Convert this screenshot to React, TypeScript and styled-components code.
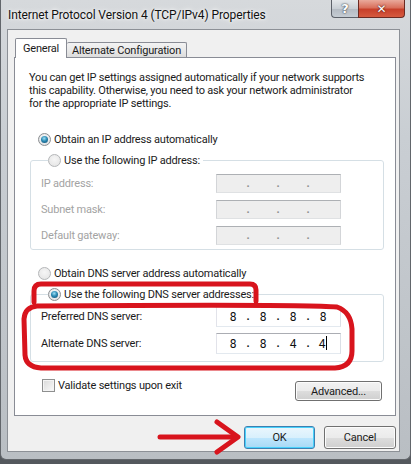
import React from "react";
import styled, { createGlobalStyle } from "styled-components";

const GlobalStyle = createGlobalStyle`
  html, body {
    margin: 0;
    padding: 0;
    background: #54585d;
  }
  body {
    font-family: Roboto, "Noto Sans", Arial, sans-serif;
    font-size: 11px;
    letter-spacing: -0.2px;
    color: #1b1b1b;
  }
`;

const ipRows = [
  { label: "IP address:" },
  { label: "Subnet mask:" },
  { label: "Default gateway:" },
];

const dnsRows = [
  { label: "Preferred DNS server:", value: ["8", "8", "8", "8"], caret: false },
  { label: "Alternate DNS server:", value: ["8", "8", "4", "4"], caret: true },
];

const IpField: React.FC<{ value?: string[]; disabled?: boolean; caret?: boolean; height: number }> = ({
  value = ["", "", "", ""],
  disabled,
  caret,
  height,
}) => (
  <IpBox $disabled={disabled} $h={height}>
    {value.map((octet, i) => (
      <React.Fragment key={i}>
        {i > 0 && <IpDot $disabled={disabled}>.</IpDot>}
        <Octet>
          {octet}
          {caret && i === 3 && <Caret />}
        </Octet>
      </React.Fragment>
    ))}
  </IpBox>
);

const App: React.FC = () => {
  return (
    <>
      <GlobalStyle />
      <Window>
        <TitleBar>
          <Title>Internet Protocol Version 4 (TCP/IPv4) Properties</Title>
          <CaptionButtons>
            <HelpButton>?</HelpButton>
            <CloseButton>✕</CloseButton>
          </CaptionButtons>
        </TitleBar>

        <Client>
          <TabStrip>
            <Tab $active>General</Tab>
            <Tab>Alternate Configuration</Tab>
          </TabStrip>

          <TabPanel>
            <Intro>
              You can get IP settings assigned automatically if your network supports
              <br />
              this capability. Otherwise, you need to ask your network administrator
              <br />
              for the appropriate IP settings.
            </Intro>

            <OptionRow $top={21}>
              <Radio $checked />
              <span>Obtain an IP address automatically</span>
            </OptionRow>

            <GroupBox>
              <GroupLegend>
                <Radio $dim />
                <span>Use the following IP address:</span>
              </GroupLegend>
              <FieldRows $gap={7}>
                {ipRows.map((row) => (
                  <FieldRow key={row.label}>
                    <FieldLabel $disabled>{row.label}</FieldLabel>
                    <IpField disabled height={19} />
                  </FieldRow>
                ))}
              </FieldRows>
            </GroupBox>

            <OptionRow $top={15}>
              <Radio $dim />
              <span>Obtain DNS server address automatically</span>
            </OptionRow>

            <GroupBox $dns>
              <GroupLegend>
                <Radio $checked />
                <span>Use the following DNS server addresses:</span>
              </GroupLegend>
              <FieldRows $gap={6}>
                {dnsRows.map((row) => (
                  <FieldRow key={row.label}>
                    <FieldLabel>{row.label}</FieldLabel>
                    <IpField value={row.value} caret={row.caret} height={21} />
                  </FieldRow>
                ))}
              </FieldRows>
            </GroupBox>

            <BottomRow>
              <CheckLabel>
                <CheckBox />
                <span>Validate settings upon exit</span>
              </CheckLabel>
              <PushButton $w={87} $h={20}>Advanced...</PushButton>
            </BottomRow>
          </TabPanel>

          <DialogButtons>
            <PushButton $w={71} $h={23} $default>OK</PushButton>
            <PushButton $w={72} $h={23}>Cancel</PushButton>
          </DialogButtons>
        </Client>

        <Annotations viewBox="0 0 411 464" width={411} height={464}>
          <g fill="none" stroke="#d8141d" strokeWidth={5} strokeLinecap="round" strokeLinejoin="round">
            <path d="M33,302 L33,291 Q33,284 40,284 L249,284 Q255,284 255,290 L255,301" />
            <path d="M36,306 Q24,307 23,319 L24,355 Q25,367 40,368 L334,368 Q351,367 351,351 L351,329 Q350,312 336,307 Q300,304 36,306 Z" />
            <path d="M159,437 L235,437" />
            <path d="M216,422 L237,437 L216,452" />
          </g>
        </Annotations>
      </Window>
    </>
  );
};

export default App;

const Window = styled.div`
  position: relative;
  width: 411px;
  height: 460px;
  box-sizing: border-box;
  padding: 0 10px 0 6px;
  display: flex;
  flex-direction: column;
  background: linear-gradient(180deg, #d6d9dc 0%, #c9ced3 30%, #c0c5ca 70%, #b9bec3 100%);
  border: 1px solid #62666b;
  border-top: none;
  border-radius: 0 0 6px 6px;
  overflow: hidden;
`;

const TitleBar = styled.div`
  height: 29px;
  display: flex;
  align-items: flex-start;
`;

const Title = styled.div`
  margin-top: 8px;
  padding-left: 1px;
  font-size: 12px;
  letter-spacing: -0.1px;
  color: #111;
  text-shadow: 0 0 6px #fff, 0 0 3px #fff;
  white-space: nowrap;
`;

const CaptionButtons = styled.div`
  display: flex;
  margin-left: auto;
  margin-right: -5px;
`;

const CaptionButton = styled.div`
  height: 18px;
  box-sizing: border-box;
  display: flex;
  align-items: center;
  justify-content: center;
  color: #fff;
  font-family: "DejaVu Sans", sans-serif;
  font-weight: bold;
  letter-spacing: 0;
  border: 1px solid #5c6169;
  border-top: none;
`;

const HelpButton = styled(CaptionButton)`
  width: 27px;
  font-size: 13px;
  border-radius: 0 0 0 4px;
  border-right: none;
  background: linear-gradient(180deg, #e4e7ea 0%, #c9cfd5 50%, #b3bac2 51%, #c5ccd3 100%);
  text-shadow: 0 0 2px #3b4048, 0 0 1px #3b4048;
`;

const CloseButton = styled(CaptionButton)`
  width: 47px;
  font-size: 12px;
  border-color: #6b2a22;
  border-radius: 0 0 4px 0;
  background: linear-gradient(180deg, #e9a99b 0%, #d9705c 45%, #c7402a 55%, #d65a3f 100%);
  text-shadow: 0 0 2px #5a1a10, 0 0 1px #5a1a10;
`;

const Client = styled.div`
  height: 423px;
  box-sizing: border-box;
  border: 1px solid #8c9096;
  background: #f0f0f0;
  padding: 8px 3px 0 6px;
  display: flex;
  flex-direction: column;
`;

const TabStrip = styled.div`
  position: relative;
  z-index: 1;
  display: flex;
  align-items: flex-end;
  height: 20px;
  padding-left: 1px;
  margin-bottom: -1px;
`;

const Tab = styled.div<{ $active?: boolean }>`
  box-sizing: border-box;
  height: ${(p) => (p.$active ? 20 : 15)}px;
  margin-bottom: ${(p) => (p.$active ? 0 : 1)}px;
  padding: 0 ${(p) => (p.$active ? 7 : 5)}px;
  display: flex;
  align-items: center;
  border: 1px solid #898c95;
  border-bottom: none;
  border-left: ${(p) => (p.$active ? "1px solid #898c95" : "none")};
  border-radius: 2px 2px 0 0;
  background: ${(p) => (p.$active ? "#ffffff" : "linear-gradient(180deg, #f3f3f3 0%, #e9e9e9 50%, #dcdcdc 100%)")};
  white-space: nowrap;
`;

const TabPanel = styled.div`
  height: 359px;
  box-sizing: border-box;
  border: 1px solid #898c95;
  background: #ffffff;
  padding: 13px 11px 0 15px;
  display: flex;
  flex-direction: column;
`;

const Intro = styled.p`
  margin: 0 0 0 -1px;
  line-height: 13px;
  white-space: nowrap;
`;

const OptionRow = styled.label<{ $top: number }>`
  display: flex;
  align-items: center;
  gap: 3px;
  height: 16px;
  margin-top: ${(p) => p.$top}px;
  margin-left: 8px;
`;

const Radio = styled.span<{ $checked?: boolean; $dim?: boolean }>`
  position: relative;
  width: 13px;
  height: 13px;
  box-sizing: border-box;
  border-radius: 50%;
  border: 1px solid ${(p) => (p.$dim ? "#b4b6b8" : "#8b8e91")};
  background: ${(p) =>
    p.$dim ? "radial-gradient(circle at 50% 40%, #f6f6f6 0%, #e2e2e2 100%)" : "radial-gradient(circle at 50% 40%, #ffffff 0%, #d6d9dc 100%)"};
  flex: none;
  &::after {
    content: "";
    display: ${(p) => (p.$checked ? "block" : "none")};
    position: absolute;
    left: 2px;
    top: 2px;
    width: 7px;
    height: 7px;
    border-radius: 50%;
    background: radial-gradient(circle at 45% 35%, #9fe0f5 0%, #2b8ab4 45%, #10486a 100%);
  }
`;

const GroupBox = styled.fieldset<{ $dns?: boolean }>`
  margin: 5px 0 0 0;
  padding: ${(p) => (p.$dns ? "4px 10px 7px 10px" : "6px 10px 4px 10px")};
  border: 1px solid #d5dfe5;
  border-radius: 3px;
  min-width: 0;
`;

const GroupLegend = styled.legend`
  display: flex;
  align-items: center;
  gap: 3px;
  height: 16px;
  padding: 0 3px 0 0;
  margin-left: 7px;
`;

const FieldRows = styled.div<{ $gap: number }>`
  display: flex;
  flex-direction: column;
  gap: ${(p) => p.$gap}px;
`;

const FieldRow = styled.div`
  display: grid;
  grid-template-columns: 175px 125px;
  align-items: center;
`;

const FieldLabel = styled.span<{ $disabled?: boolean }>`
  color: ${(p) => (p.$disabled ? "#a3a3a3" : "#1b1b1b")};
`;

const IpBox = styled.div<{ $disabled?: boolean; $h: number }>`
  width: 125px;
  height: ${(p) => p.$h}px;
  box-sizing: border-box;
  display: grid;
  grid-template-columns: 26px 4px 26px 4px 26px 4px 26px;
  align-items: center;
  padding-left: 3px;
  border: 1px solid;
  border-color: ${(p) => (p.$disabled ? "#adb0b4 #d3d5d8 #dfe1e3 #d3d5d8" : "#abadb3 #dbdfe6 #e3e9ef #e2e3ea")};
  background: ${(p) => (p.$disabled ? "#eeeeee" : "#ffffff")};
`;

const Octet = styled.span`
  text-align: center;
  font-size: 12px;
  letter-spacing: 0;
  color: #111;
`;

const IpDot = styled.span<{ $disabled?: boolean }>`
  text-align: center;
  color: ${(p) => (p.$disabled ? "#8d8d8d" : "#111")};
  font-weight: bold;
`;

const Caret = styled.span`
  display: inline-block;
  width: 1px;
  height: 14px;
  margin-left: 1px;
  vertical-align: -2px;
  background: #000;
`;

const BottomRow = styled.div`
  display: flex;
  justify-content: space-between;
  align-items: flex-start;
  margin-top: 15px;
  padding-right: 2px;
`;

const CheckLabel = styled.label`
  display: flex;
  align-items: center;
  gap: 3px;
  margin-left: 12px;
  height: 16px;
`;

const CheckBox = styled.span`
  width: 13px;
  height: 13px;
  box-sizing: border-box;
  border: 1px solid #8e8f8f;
  background: linear-gradient(135deg, #d9d9d9 0%, #ededed 60%, #fbfbfb 100%);
  box-shadow: inset 0 0 0 1px #f4f4f4;
  flex: none;
`;

const PushButton = styled.div<{ $w: number; $h: number; $default?: boolean }>`
  width: ${(p) => p.$w}px;
  height: ${(p) => p.$h}px;
  margin-top: 4px;
  box-sizing: border-box;
  display: flex;
  align-items: center;
  justify-content: center;
  border: 1px solid ${(p) => (p.$default ? "#3c7fb1" : "#707070")};
  border-radius: 3px;
  background: ${(p) =>
    p.$default
      ? "linear-gradient(180deg, #eaf6fd 0%, #d9f0fc 50%, #bee6fd 51%, #a7d9f5 100%)"
      : "linear-gradient(180deg, #f2f2f2 0%, #ebebeb 50%, #dddddd 51%, #cfcfcf 100%)"};
  box-shadow: inset 0 0 0 1px ${(p) => (p.$default ? "#48d1fb" : "#fcfcfc")};
`;

const DialogButtons = styled.div`
  display: flex;
  justify-content: flex-end;
  gap: 9px;
  margin-top: 6px;
`;

const Annotations = styled.svg`
  position: absolute;
  left: 0;
  top: 0;
  pointer-events: none;
`;
